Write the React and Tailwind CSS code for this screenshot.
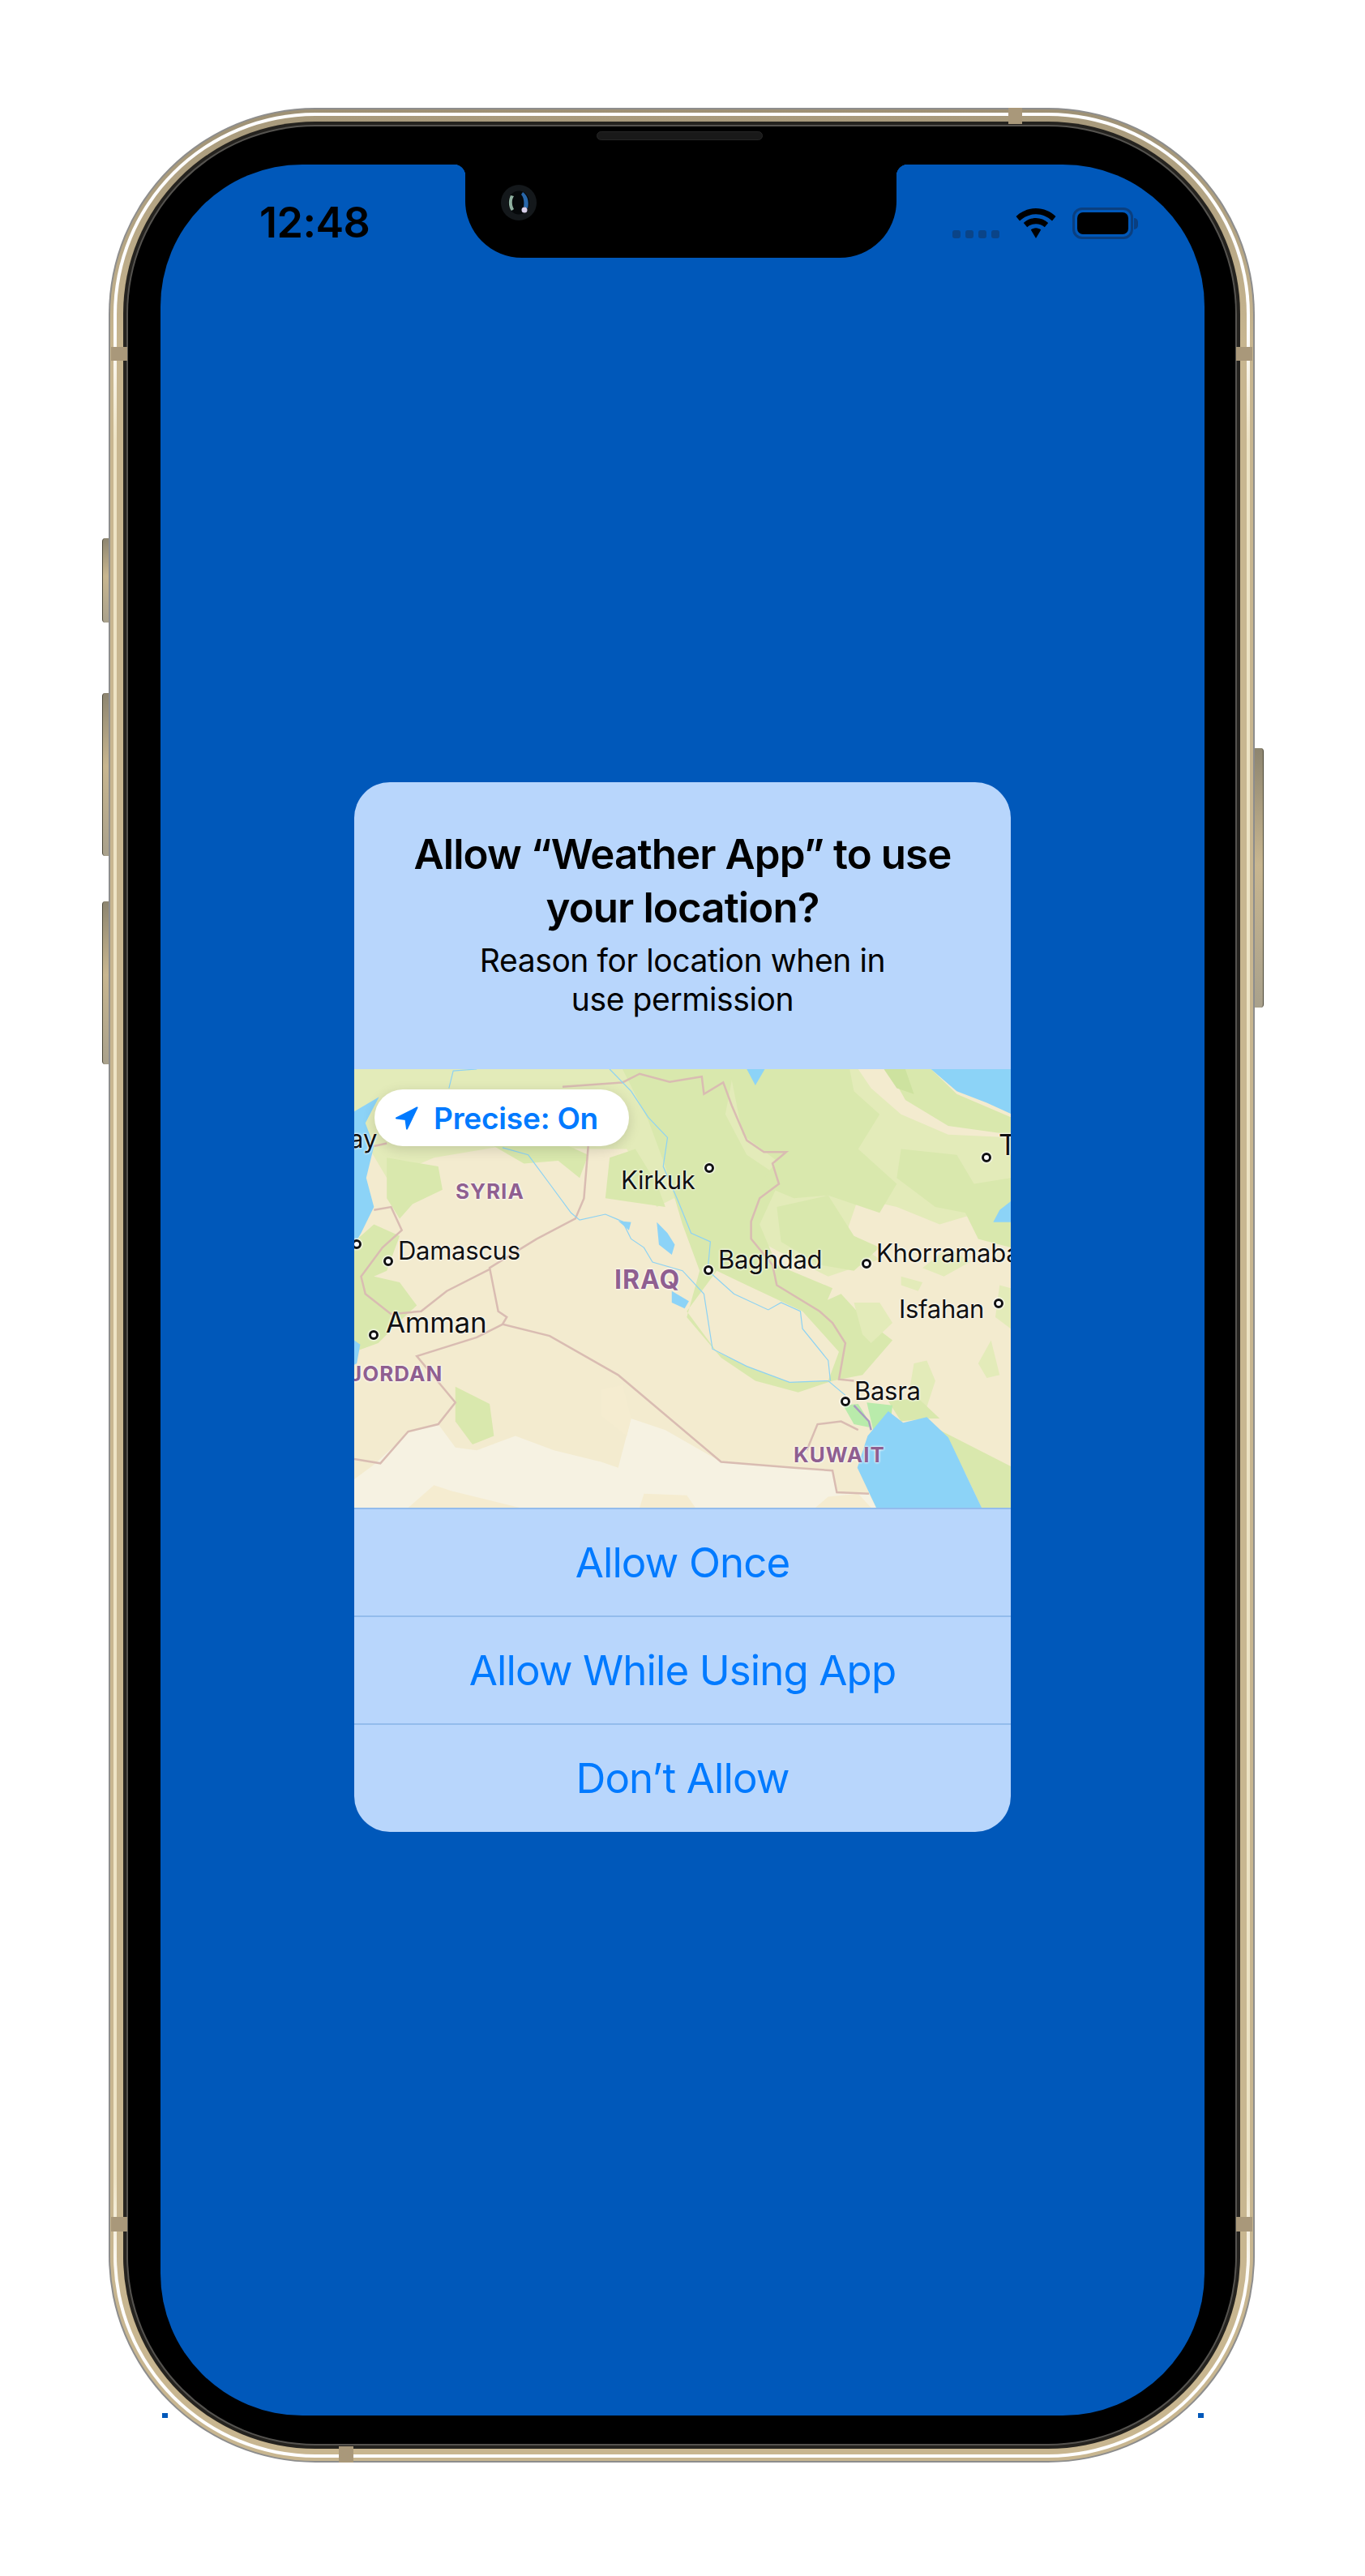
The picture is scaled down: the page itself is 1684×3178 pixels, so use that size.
// iPhone mockup with the location permission alert
function MapShapes() {
  return (
    <svg className="absolute inset-0 w-full h-full" viewBox="14 24 1532 1514" preserveAspectRatio="none">
      <rect x="14" y="24" width="1532" height="1514" fill="#f3ebcf" />
      {/* pale desert in the south */}
      <path fill="#f6f2e2" d="M14 1440 L60 1390 140 1280 210 1250 250 1330 300 1340 390 1290 480 1340 590 1380 630 1400 660 1230 740 1270 870 1380 1040 1400 1130 1410 1140 1490 1215 1490 1232 1538 H14Z" />
      <path fill="#f5ecd0" d="M590 1130 L640 1115 660 1230 650 1290 590 1220Z M680 1538 L690 1490 790 1495 810 1538Z M1090 1538 L1120 1500 1190 1490 1220 1538Z M140 1538 L200 1460 240 1480 400 1538Z" />
      {/* northern green belt */}
      <path fill="#e3ebb9" d="M14 24 H1190 L1220 90 1290 180 1400 250 1546 260 V560 L1470 520 1380 560 1280 500 1190 470 1160 600 1240 680 1120 740 1000 650 890 560 850 520 760 470 720 500 650 300 560 300 360 290 200 330 90 400 50 300 14 300Z" />
      <path fill="#d9e8ad" d="M640 24 H900 L880 180 930 320 1010 400 960 560 1000 700 1130 780 1110 850 1060 860 930 770 860 720 790 860 860 1000 930 1050 1030 1105 1120 1100 1145 1000 1060 860 1150 800 1200 880 1270 960 1200 1080 1130 1100 1050 1140 950 1100 870 1020 790 880 820 720 780 560 740 360 700 200Z" />
      <path fill="#d9e8ad" d="M890 24 H1170 L1180 100 1240 180 1190 300 1280 420 1240 520 1120 460 1040 470 960 420 1000 340 920 250Z" />
      <path fill="#d9e8ad" d="M1260 24 H1360 L1420 110 1546 190 V250 L1400 220 1300 130Z" />
      <path fill="#cde29f" d="M1250 24 H1300 L1320 110 1280 90Z" />
      <path fill="#d9e8ad" d="M1290 300 L1420 320 1460 420 1546 400 V640 L1470 610 1440 520 1370 500 1280 400Z" />
      <path fill="#d9e8ad" d="M1000 500 L1120 460 1180 600 1240 640 1180 720 1100 700 1010 620Z" />
      <path fill="#d9e8ad" d="M90 330 L210 360 220 440 150 490 120 540 90 470Z" />
      <path fill="#d9e8ad" d="M340 290 L500 280 560 320 540 400 490 340 410 350Z" />
      <path fill="#d9e8ad" d="M610 330 L670 300 720 420 740 500 600 470Z" />
      <path fill="#d9e8ad" d="M14 620 L60 560 120 600 90 720 60 740 120 760 160 840 130 880 70 970 14 1000Z" />
      {/* patches on the eastern plateau */}
      <path fill="#e3ebb9" d="M1180 830 L1240 830 1270 900 1220 970 1200 940Z M1320 1040 L1350 1030 1370 1100 1350 1190 1310 1130Z M1470 1040 L1500 960 1520 1080 1490 1090Z M1520 770 L1546 780 V920 L1510 880Z M1400 640 L1450 690 1390 740 1340 710Z M1290 740 L1340 760 1330 790 1290 770Z" />
      <path fill="#d9e8ad" d="M250 1120 L330 1180 340 1290 290 1320 250 1240Z" />
      <path fill="#d9e8ad" d="M1380 1270 L1546 1395 V1538 H1478 L1440 1420Z" />
      <path fill="#d9e8ad" d="M1260 1170 L1330 1160 1380 1230 1350 1230 1290 1240Z" />
      {/* marshes around Basra */}
      <path fill="#b9ebab" d="M1155 1185 L1190 1180 1215 1240 1215 1260 1180 1250Z M1210 1175 L1270 1185 1265 1250 1225 1270Z" />
      {/* water */}
      <path fill="#8cd3f7" d="M1360 24 H1546 V178 L1490 140 1420 100Z" />
      <path fill="#8cd3f7" d="M14 170 L72 120 40 210 60 290 42 400 60 500 30 590 14 630Z" />
      <path fill="#8cd3f7" d="M1212 1290 L1260 1205 1295 1245 1350 1225 1400 1295 1440 1420 1478 1538 H1232 L1188 1400Z" />
      <path fill="#8cd3f7" d="M930 24 H972 L950 80Z M720 552 L745 590 762 630 755 665 725 630Z M755 790 L795 825 785 850 755 830Z M630 548 L660 552 655 580Z M1546 480 V552 H1505 L1520 510Z M14 960 L28 975 20 1040 14 1045Z" />
      {/* borders */}
      <g fill="none" stroke="#d9bcb2" strokeWidth="2.5" vectorEffect="non-scaling-stroke">
        <path vectorEffect="non-scaling-stroke" d="M500 85 L640 70 680 40 750 68 825 50 830 110 875 70 895 150 930 270 970 310 1022 310 990 350 1005 420 960 470 940 550 940 610 990 700 1000 770 1100 860 1130 900 1160 970 1145 1095 1180 1100" />
        <path vectorEffect="non-scaling-stroke" d="M560 290 L550 470 530 540 440 610 330 710 350 860 370 880 360 905 470 945 630 1080 870 1380 1040 1400 1130 1410 1140 1485 1215 1490" />
        <path vectorEffect="non-scaling-stroke" d="M330 715 L230 790 170 860 100 870 40 800 30 740 80 640 125 580 100 500 60 510" />
        <path vectorEffect="non-scaling-stroke" d="M360 905 L300 950 160 1015 250 1175 210 1250 140 1275 75 1385 14 1370" />
        <path vectorEffect="non-scaling-stroke" d="M1070 1340 L1095 1250 1150 1240 1190 1270 M60 290 L90 280" />
        <path vectorEffect="non-scaling-stroke" d="M1180 1185 L1215 1240 1220 1270" stroke="#a99ac0" />
      </g>
      {/* rivers */}
      <g fill="none" stroke="#8dd2f3" strokeWidth="1.2">
        <path vectorEffect="non-scaling-stroke" d="M610 24 L660 100 700 190 745 260 735 360 770 480 800 590 845 620 840 700" />
        <path vectorEffect="non-scaling-stroke" d="M360 295 L420 320 470 420 520 520 540 545 600 525 640 550 660 610 690 640 710 690 780 720 830 800 850 990 930 1050 1030 1105 1120 1100 1160 1150" />
        <path vectorEffect="non-scaling-stroke" d="M840 720 L900 800 980 855 1010 830 1055 860 1060 920 1120 1030 1125 1100" />
        <path vectorEffect="non-scaling-stroke" d="M235 90 L245 30 300 24" />
      </g>
    </svg>
  );
}

function Dot({ className }) {
  return <span className={`absolute w-3 h-3 rounded-full border-[3px] border-[#111] bg-white shadow-[0_0_2px_1px_#fff] ${className}`} />;
}

function City({ className, children }) {
  return <span className={`absolute whitespace-nowrap leading-none text-[#111] [text-shadow:0_0_3px_#fff,0_0_3px_#fff] ${className}`}>{children}</span>;
}

function Region({ className, children }) {
  return <span className={`absolute whitespace-nowrap leading-none font-bold text-[#8f5f90] [text-shadow:0_0_3px_#fff,0_0_3px_#fff] ${className}`}>{children}</span>;
}

function LocationMap() {
  return (
    <div className="relative h-[541px] overflow-hidden">
      <MapShapes />

      <City className="left-[-6px] top-[70px] text-[31px]">ay</City>
      <Region className="left-[125px] top-[138px] text-[26px] tracking-[1px]">SYRIA</Region>
      <City className="left-[329px] top-[121px] text-[31px] tracking-[-0.3px]">Kirkuk</City>
      <Dot className="left-[432px] top-[116px]" />
      <Dot className="left-[774px] top-[103px]" />
      <City className="left-[795px] top-[76px] text-[35px]">T</City>

      <Dot className="left-[-3px] top-[210px]" />
      <Dot className="left-[36px] top-[231px]" />
      <City className="left-[54px] top-[208px] text-[31px] tracking-[-0.3px]">Damascus</City>
      <Region className="left-[321px] top-[244px] text-[32px] tracking-[1px]">IRAQ</Region>
      <Dot className="left-[431px] top-[242px]" />
      <City className="left-[449px] top-[219px] text-[31px] tracking-[-0.3px]">Baghdad</City>
      <Dot className="left-[626px] top-[234px]" />
      <City className="left-[644px] top-[211px] text-[31px] tracking-[-0.3px]">Khorramabad</City>
      <City className="left-[672px] top-[280px] text-[31px] tracking-[-0.3px]">Isfahan</City>
      <Dot className="left-[789px] top-[283px]" />

      <Dot className="left-[18px] top-[322px]" />
      <City className="left-[39px] top-[295px] text-[35px] tracking-[-0.3px]">Amman</City>
      <Region className="left-[-6px] top-[363px] text-[26px] tracking-[1px]">JORDAN</Region>
      <Dot className="left-[600px] top-[404px]" />
      <City className="left-[617px] top-[381px] text-[31px] tracking-[-0.3px]">Basra</City>
      <Region className="left-[542px] top-[463px] text-[26px] tracking-[1px]">KUWAIT</Region>

      {/* precise location toggle */}
      <div className="absolute left-[25px] top-[25px] w-[314px] h-[70px] rounded-full bg-white shadow-[0_4px_16px_rgba(0,0,0,0.14)] flex items-center pl-[25px] gap-[19px] text-[#007aff]">
        <svg width="29" height="29" viewBox="0 0 29 29" fill="#007aff" stroke="#007aff" strokeWidth="2" strokeLinejoin="round">
          <path d="M27.5 1.5 L2 14.5 L13.5 16 L15 27.5 Z" />
        </svg>
        <span className="text-[37px] font-semibold leading-none tracking-[-0.2px] whitespace-nowrap">Precise: On</span>
      </div>
    </div>
  );
}

function AlertButton({ children }) {
  return (
    <div className="h-[133px] border-t-2 border-[#93bcec] flex items-center justify-center text-[#007aff] text-[51px] leading-none tracking-[-0.9px]">
      {children}
    </div>
  );
}

function StatusBar() {
  return (
    <div className="flex justify-between items-start pt-[46px] pl-[122px] pr-[82px] text-black">
      <span className="text-[52px] leading-none font-semibold tracking-[-0.5px]">12:48</span>
      <div className="flex items-end gap-[20px] mt-[7px] h-[39px]">
        <div className="flex gap-[6px] mb-[1px]">
          <span className="w-[10px] h-[10px] rounded-[3px] bg-[#0a4488]" />
          <span className="w-[10px] h-[10px] rounded-[3px] bg-[#0a4488]" />
          <span className="w-[10px] h-[10px] rounded-[3px] bg-[#0a4488]" />
          <span className="w-[10px] h-[10px] rounded-[3px] bg-[#0a4488]" />
        </div>
        <svg width="50" height="37" viewBox="0 0 50 37" fill="#000" className="mb-[1px]">
          <path d="M25 0 C15.5 0 7 3.8 0.5 10 L5 15.5 C10.3 10.5 17.3 7.3 25 7.3 C32.7 7.3 39.7 10.5 45 15.5 L49.5 10 C43 3.8 34.5 0 25 0Z" />
          <path d="M25 12 C19.3 12 14 14.2 9.8 18 L14.2 23.3 C17.2 20.7 20.9 19.2 25 19.2 C29.1 19.2 32.8 20.7 35.8 23.3 L40.2 18 C36 14.2 30.7 12 25 12Z" />
          <path d="M25 24.3 C22.6 24.3 20.4 25.2 18.8 26.6 L25 37 L31.2 26.6 C29.6 25.2 27.4 24.3 25 24.3Z" />
        </svg>
        <div className="flex items-center">
          <div className="w-[75px] h-[39px] rounded-[12px] border-[3px] border-[#0a3f80] p-[3px]">
            <div className="w-full h-full rounded-[7px] bg-black" />
          </div>
          <span className="w-[5px] h-[14px] rounded-r-full bg-[#0a3f80] ml-[1px]" />
        </div>
      </div>
    </div>
  );
}

function Notch() {
  return (
    <div className="absolute left-[376px] top-0 w-[532px] h-[115px] bg-black rounded-b-[70px]">
      <span className="absolute left-[-14px] top-0 w-[14px] h-[14px] bg-[radial-gradient(circle_at_0_100%,transparent_14px,#000_14.5px)]" />
      <span className="absolute right-[-14px] top-0 w-[14px] h-[14px] bg-[radial-gradient(circle_at_100%_100%,transparent_14px,#000_14.5px)]" />
      {/* front camera */}
      <div className="absolute left-[44px] top-[25px] w-[44px] h-[44px] rounded-full bg-[#14181b] flex items-center justify-center">
        <svg width="28" height="30" viewBox="0 0 28 30">
          <ellipse cx="14" cy="15" rx="13" ry="14.5" fill="#05080a" />
          <path d="M4 6 C1 12 1 20 5 25 L8 23 C5 18 5 11 8 7Z" fill="#8fb0a0" />
          <path d="M19 2 C25 6 27 14 25 22 L20 20 C21 14 20 8 17 5Z" fill="#2866a8" />
          <circle cx="21" cy="24" r="3.5" fill="#d8d0ea" />
        </svg>
      </div>
    </div>
  );
}

function AntennaBand({ className }) {
  return <span className={`absolute bg-[#a9987a] ${className}`} />;
}

export default function App() {
  return (
    <div className="relative w-[1684px] h-[3178px] bg-white pt-[133px] pl-[134px] font-['Inter',sans-serif]">
      {/* corners of the screen that poke out of the frame */}
      <span className="absolute left-[200px] top-[2977px] w-[7px] h-[6px] bg-[#0058ba]" />
      <span className="absolute left-[1478px] top-[2977px] w-[7px] h-[6px] bg-[#0058ba]" />

      {/* side buttons */}
      <span className="absolute left-[126px] top-[664px] w-[9px] h-[104px] rounded-l-[4px] border-l border-[#4a4636] bg-[linear-gradient(180deg,#8d8570,#c8b690_45%,#a9a18c)]" />
      <span className="absolute left-[126px] top-[855px] w-[9px] h-[201px] rounded-l-[4px] border-l border-[#4a4636] bg-[linear-gradient(180deg,#8d8570,#c8b690_45%,#a9a18c)]" />
      <span className="absolute left-[126px] top-[1112px] w-[9px] h-[201px] rounded-l-[4px] border-l border-[#4a4636] bg-[linear-gradient(180deg,#8d8570,#c8b690_45%,#a9a18c)]" />
      <span className="absolute left-[1547px] top-[923px] w-[12px] h-[320px] rounded-r-[4px] border-r border-[#4a4636] bg-[linear-gradient(180deg,#8d8570,#c8b690_45%,#a9a18c)]" />

      {/* phone frame, layer by layer */}
      <div className="relative w-[1414px] h-[2905px] rounded-[255px] bg-[#8d8d8d] p-[2px]">
        <div className="h-full rounded-[253px] bg-[linear-gradient(180deg,#9e9175_0%,#c8b690_10%,#c8b690_100%)] p-[4px]">
          <div className="h-full rounded-[249px] bg-[linear-gradient(180deg,#fff_0%,#fff_9%,#eee3c5_14%,#eee3c5_88%,#fff_93%)] p-[4px]">
            <div className="h-full rounded-[245px] bg-[linear-gradient(180deg,#a89a7c_0%,#c8b690_10%,#c8b690_100%)] py-[7px] px-[8px]">
              <div className="h-full rounded-[237px] bg-[#25231f] p-[4px]">
                <div className="h-full rounded-[233px] bg-[#55534f] p-[2px]">
                  <div className="relative h-full rounded-[231px] bg-black pl-[40px] pr-[38px] pt-[47px] pb-[35px]">
                    {/* speaker */}
                    <span className="absolute left-[578px] top-[6px] w-[205px] h-[11px] rounded-full bg-[#191919] border border-[#262626]" />

                    <div className="relative h-full rounded-[175px] bg-[#0058ba] overflow-hidden">
                      <Notch />
                      <StatusBar />

                      {/* location alert */}
                      <div className="mt-[664px] mx-auto w-[810px] h-[1295px] rounded-[44px] overflow-hidden bg-[#b8d6fc] text-black text-center">
                        <div className="h-[354px] pt-[56px]">
                          <h1 className="text-[51px] leading-[66px] font-semibold tracking-[-0.9px]">
                            Allow “Weather App” to use<br />your location?
                          </h1>
                          <p className="mt-[8px] text-[39px] leading-[48px] tracking-[-0.4px]">
                            Reason for location when in<br />use permission
                          </p>
                        </div>
                        <LocationMap />
                        <AlertButton>Allow Once</AlertButton>
                        <AlertButton>Allow While Using App</AlertButton>
                        <AlertButton>Don’t Allow</AlertButton>
                      </div>
                    </div>
                  </div>
                </div>
              </div>
            </div>
          </div>
        </div>

        {/* antenna bands */}
        <AntennaBand className="left-[1110px] top-0 w-[17px] h-[20px]" />
        <AntennaBand className="left-[284px] bottom-0 w-[18px] h-[20px]" />
        <AntennaBand className="left-[3px] top-[295px] w-[20px] h-[17px]" />
        <AntennaBand className="right-[3px] top-[295px] w-[20px] h-[17px]" />
        <AntennaBand className="left-[3px] top-[2602px] w-[20px] h-[18px]" />
        <AntennaBand className="right-[3px] top-[2602px] w-[20px] h-[18px]" />
      </div>
    </div>
  );
}
